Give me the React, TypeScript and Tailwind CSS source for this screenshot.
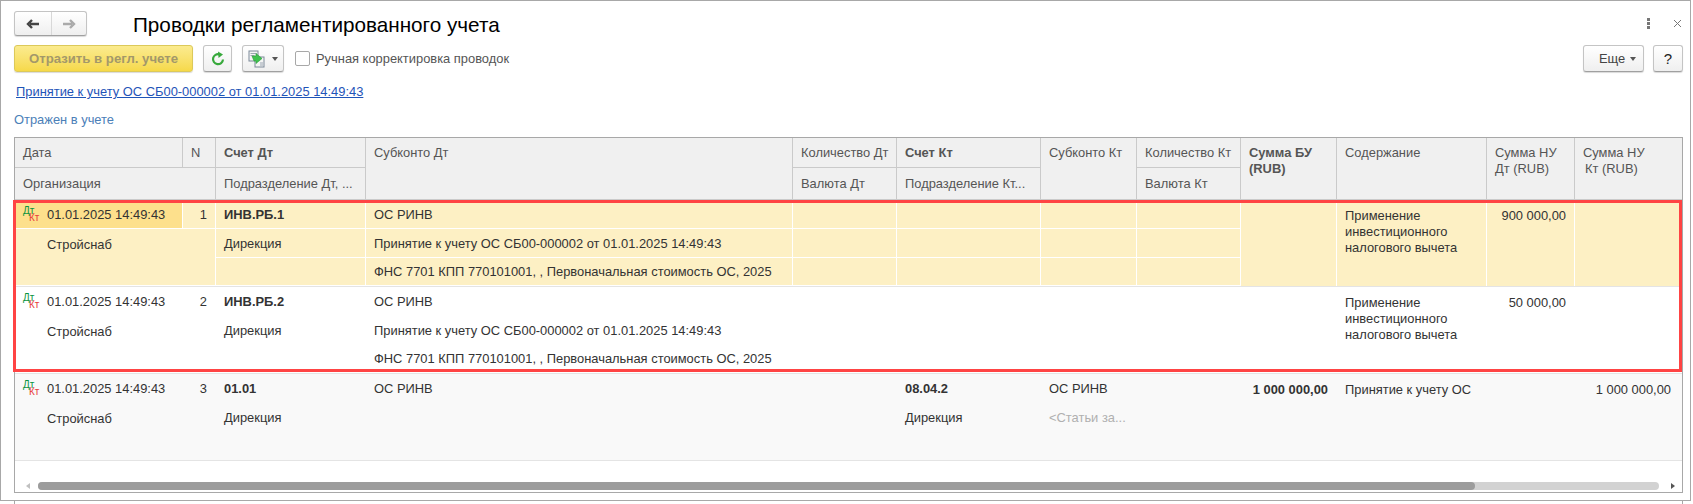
import { ReactNode } from "react";

const gridCols = "grid grid-cols-[168px_33px_150px_427px_104px_144px_96px_104px_96px_150px_88px_107px]";

function Btn({ className, children }: { className: string; children: ReactNode }) {
    return (
        <div className={`h-[27px] flex items-center justify-center rounded-[3px] border border-[#c4c4c4] border-b-[#a0a0a0] bg-gradient-to-b from-white to-[#efefef] shadow-[0_1px_1px_rgba(0,0,0,0.15)] ${className}`}>
            {children}
        </div>
    );
}

function Caret() {
    return <span className="w-0 h-0 border-x-[3.5px] border-x-transparent border-t-[4px] border-t-[#555]" />;
}

function CopyIcon() {
    return (
        <svg width="18" height="18" viewBox="0 0 18 18">
            <rect x="1" y="1" width="9" height="10" fill="#f4f4f4" stroke="#7d8a99" />
            <rect x="7" y="7" width="9" height="10" fill="#f4f4f4" stroke="#7d8a99" />
            <path d="M2.5 3.5h6M2.5 5.5h4M12 13h3M12 15h3" stroke="#9aa6b2" />
            <path d="M4 5h4V2.5l6 5-6 5V10H6z" fill="#3fc24f" stroke="#2b9a3b" strokeWidth="0.6" transform="translate(0 1)" />
        </svg>
    );
}

function DtKt() {
    return (
        <span className="relative block w-[20px] h-[20px] shrink-0 text-[10px] leading-[7px]">
            <span className="absolute left-0 top-[2px] text-[#0a9440]">Дт</span>
            <span className="absolute left-[6px] top-[9px] text-[#e8413c]">Кт</span>
        </span>
    );
}

function HeadCell({ className = "", bold, children }: { className?: string; bold?: boolean; children: ReactNode }) {
    return (
        <div className={`px-2 border-r border-b border-[#cacaca] overflow-hidden whitespace-nowrap ${bold ? "font-bold" : ""} ${className}`}>
            {children}
        </div>
    );
}

type RowData = {
    n: string;
    acc: string;
    content?: string[];
    ruDt?: string;
    ruKt?: string;
    sub: string[];
    accKt?: string;
    depKt?: string;
    subKt?: string;
    subKt2?: string;
    sum?: string;
    bg: string;
    line: string;
    dateBg: string;
};

function Cell({ line, className = "", children }: { line: string; className?: string; children?: ReactNode }) {
    return <div className={`px-2 pt-px flex items-center whitespace-nowrap overflow-hidden border-r border-b ${line} ${className}`}>{children}</div>;
}

function Row({ r }: { r: RowData }) {
    const l = r.line;
    return (
        <div className={`${gridCols} grid-rows-[29px_29px_28px] border-b border-[#e4e4e4] ${r.bg}`}>
            <Cell line={l} className={`col-start-1 row-start-1 gap-1 ${r.dateBg}`}>
                <DtKt />
                <span>01.01.2025 14:49:43</span>
            </Cell>
            <Cell line={l} className="col-start-2 row-start-1 justify-end">{r.n}</Cell>
            <Cell line={l} className="col-start-1 col-span-2 row-start-2 row-span-2 !items-start pl-8 !pt-[8px]">Стройснаб</Cell>

            <Cell line={l} className="col-start-3 row-start-1 font-bold">{r.acc}</Cell>
            <Cell line={l} className="col-start-3 row-start-2">Дирекция</Cell>
            <Cell line={l} className="col-start-3 row-start-3" />

            <Cell line={l} className="col-start-4 row-start-1">{r.sub[0]}</Cell>
            <Cell line={l} className="col-start-4 row-start-2">{r.sub[1]}</Cell>
            <Cell line={l} className="col-start-4 row-start-3">{r.sub[2]}</Cell>

            <Cell line={l} className="col-start-5 row-start-1" />
            <Cell line={l} className="col-start-5 row-start-2" />
            <Cell line={l} className="col-start-5 row-start-3" />

            <Cell line={l} className="col-start-6 row-start-1 font-bold">{r.accKt}</Cell>
            <Cell line={l} className="col-start-6 row-start-2">{r.depKt}</Cell>
            <Cell line={l} className="col-start-6 row-start-3" />

            <Cell line={l} className="col-start-7 row-start-1">{r.subKt}</Cell>
            <Cell line={l} className="col-start-7 row-start-2 text-[#b0b0b0]">{r.subKt2}</Cell>
            <Cell line={l} className="col-start-7 row-start-3" />

            <Cell line={l} className="col-start-8 row-start-1" />
            <Cell line={l} className="col-start-8 row-start-2" />
            <Cell line={l} className="col-start-8 row-start-3" />

            <div className={`col-start-9 row-start-1 row-span-3 border-r ${l} px-2 pt-[8px] text-right font-bold`}>{r.sum}</div>
            <div className={`col-start-10 row-start-1 row-span-3 border-r ${l} px-2 pt-[8px] leading-4`}>
                {r.content?.map((t) => <div key={t} className="whitespace-nowrap">{t}</div>)}
            </div>
            <div className={`col-start-11 row-start-1 row-span-3 border-r ${l} px-2 pt-[8px] text-right`}>{r.ruDt}</div>
            <div className="col-start-12 row-start-1 row-span-3 pl-3 pr-[11px] pt-[8px] text-right">{r.ruKt}</div>
        </div>
    );
}

const sub = [
    "ОС РИНВ",
    "Принятие к учету ОС СБ00-000002 от 01.01.2025 14:49:43",
    "ФНС 7701 КПП 770101001, , Первоначальная стоимость ОС, 2025",
];
const vychet = ["Применение", "инвестиционного", "налогового вычета"];

const rows: RowData[] = [
    { n: "1", acc: "ИНВ.РБ.1", sub, content: vychet, ruDt: "900 000,00", bg: "bg-[#fdf0c4]", line: "border-white", dateBg: "bg-[#fde08c]" },
    { n: "2", acc: "ИНВ.РБ.2", sub, content: vychet, ruDt: "50 000,00", bg: "bg-white", line: "border-transparent", dateBg: "" },
    {
        n: "3",
        acc: "01.01",
        sub: ["ОС РИНВ", "", ""],
        accKt: "08.04.2",
        depKt: "Дирекция",
        subKt: "ОС РИНВ",
        subKt2: "<Статьи за...",
        sum: "1 000 000,00",
        content: ["Принятие к учету ОС"],
        ruKt: "1 000 000,00",
        bg: "bg-[#f9f9f9]",
        line: "border-transparent",
        dateBg: "",
    },
];

export default function App() {
    return (
        <div className="w-[1693px] h-[504px] bg-white overflow-hidden font-['Liberation_Sans',Arial,sans-serif] text-[12.9px] leading-4 text-[#333]">
            <div className="w-[1691px] h-[501px] border border-[#a8a8a8] flex flex-col">
                {/* title bar */}
                <div className="h-[44px] shrink-0 flex items-start pl-[13px] pt-[10px] relative">
                    <div className="flex w-[73px] h-[25px] rounded-[3px] border border-[#c4c4c4] border-b-[#a0a0a0] bg-gradient-to-b from-white to-[#efefef] shadow-[0_1px_1px_rgba(0,0,0,0.15)]">
                        <div className="w-[37px] flex items-center justify-center border-r border-[#d8d8d8]">
                            <svg width="14" height="10" viewBox="0 0 14 10"><path d="M13 5H4M6 1 2 5l4 4" fill="none" stroke="#444" strokeWidth="2.4" /></svg>
                        </div>
                        <div className="flex-1 flex items-center justify-center">
                            <svg width="14" height="10" viewBox="0 0 14 10"><path d="M1 5h9M8 1l4 4-4 4" fill="none" stroke="#aaa" strokeWidth="2.4" /></svg>
                        </div>
                    </div>
                    <h1 className="ml-[46px] mt-[2px] text-[20.7px] leading-[24px] text-black">Проводки регламентированного учета</h1>
                    <div className="ml-auto mr-[8px] mt-[7px] flex items-center gap-[23px]">
                        <div className="flex flex-col gap-[1px]">
                            <span className="w-[3px] h-[3px] bg-[#777]" />
                            <span className="w-[3px] h-[3px] bg-[#777]" />
                            <span className="w-[3px] h-[3px] bg-[#777]" />
                        </div>
                        <svg width="9" height="9" viewBox="0 0 9 9"><path d="M1 1l7 7M8 1 1 8" stroke="#777" /></svg>
                    </div>
                </div>

                {/* command bar */}
                <div className="h-[27px] shrink-0 flex items-center pl-[13px] pr-[7px]">
                    <div className="w-[179px] h-[27px] flex items-center justify-center rounded-[3px] border border-[#dcc95a] bg-gradient-to-b from-[#fbeb8e] to-[#f6d949] shadow-[0_1px_1px_rgba(0,0,0,0.15)] font-bold text-[13.2px] text-[#a3986a]">
                        Отразить в регл. учете
                    </div>
                    <Btn className="w-[29px] ml-[10px]">
                        <svg width="16" height="16" viewBox="0 0 16 16" fill="none">
                            <path d="M13 8.5A5 5 0 1 1 9.5 3.4" stroke="#37a93c" strokeWidth="2.2" />
                            <path d="M8 0.5 13 3.5 8.5 7z" fill="#37a93c" />
                        </svg>
                    </Btn>
                    <Btn className="w-[42px] ml-[10px] gap-[6px]">
                        <CopyIcon />
                        <Caret />
                    </Btn>
                    <span className="ml-[11px] w-[15px] h-[15px] rounded-[2px] border border-[#a8a8a8] bg-white" />
                    <span className="ml-[6px] text-[#555]">Ручная корректировка проводок</span>
                    <Btn className="w-[61px] ml-auto gap-[5px] pl-[8px] text-[#444]">
                        Еще
                        <Caret />
                    </Btn>
                    <Btn className="w-[30px] ml-[9px] text-[15px] text-[#222]">?</Btn>
                </div>

                <a className="ml-[15px] mt-[12px] text-[#1f54b8] underline w-fit">Принятие к учету ОС СБ00-000002 от 01.01.2025 14:49:43</a>
                <div className="ml-[13px] mt-[12px] text-[#4b80b8]">Отражен в учете</div>

                {/* table */}
                <div className="ml-[13px] mt-[9px] w-[1669px] h-[356px] border border-[#a8a8a8] flex flex-col">
                    <div className={`${gridCols} grid-rows-[30px_32px] bg-[#f0f0f0] text-[#555] shrink-0`}>
                        <HeadCell className="col-start-1 row-start-1 pt-[7px]">Дата</HeadCell>
                        <HeadCell className="col-start-2 row-start-1 pt-[7px]">N</HeadCell>
                        <HeadCell className="col-start-1 col-span-2 row-start-2 pt-[8px]">Организация</HeadCell>
                        <HeadCell bold className="col-start-3 row-start-1 pt-[7px]">Счет Дт</HeadCell>
                        <HeadCell className="col-start-3 row-start-2 pt-[8px]">Подразделение Дт, ...</HeadCell>
                        <HeadCell className="col-start-4 row-start-1 row-span-2 pt-[7px]">Субконто Дт</HeadCell>
                        <HeadCell className="col-start-5 row-start-1 pt-[7px]">Количество Дт</HeadCell>
                        <HeadCell className="col-start-5 row-start-2 pt-[8px]">Валюта Дт</HeadCell>
                        <HeadCell bold className="col-start-6 row-start-1 pt-[7px]">Счет Кт</HeadCell>
                        <HeadCell className="col-start-6 row-start-2 pt-[8px]">Подразделение Кт...</HeadCell>
                        <HeadCell className="col-start-7 row-start-1 row-span-2 pt-[7px]">Субконто Кт</HeadCell>
                        <HeadCell className="col-start-8 row-start-1 pt-[7px]">Количество Кт</HeadCell>
                        <HeadCell className="col-start-8 row-start-2 pt-[8px]">Валюта Кт</HeadCell>
                        <HeadCell bold className="col-start-9 row-start-1 row-span-2 pt-[7px]">Сумма БУ<br />(RUB)</HeadCell>
                        <HeadCell className="col-start-10 row-start-1 row-span-2 pt-[7px]">Содержание</HeadCell>
                        <HeadCell className="col-start-11 row-start-1 row-span-2 pt-[7px]">Сумма НУ<br />Дт (RUB)</HeadCell>
                        <HeadCell className="col-start-12 row-start-1 row-span-2 pt-[7px] !border-r-0">Сумма НУ<br /><span className="ml-[2px]">Кт (RUB)</span></HeadCell>
                    </div>

                    <div className="relative">
                        {rows.map((r) => <Row key={r.n} r={r} />)}
                        <div className="absolute -left-[2px] top-0 w-[1669px] h-[172px] border-[3px] border-[#ff4444] pointer-events-none" />
                    </div>

                    {/* horizontal scrollbar */}
                    <div className="flex-1 flex items-end pb-[2px] pl-[11px] pr-[7px] gap-[8px]">
                        <span className="mb-[1px] w-0 h-0 border-y-[3px] border-y-transparent border-r-[4px] border-r-[#c0c0c0]" />
                        <div className="flex-1 h-[8px] rounded-full bg-[#d2d2d2] flex">
                            <div className="w-[1437px] h-full rounded-full bg-[#9c9c9c]" />
                        </div>
                        <span className="mb-[1px] ml-[4px] w-0 h-0 border-y-[3px] border-y-transparent border-l-[4px] border-l-[#555]" />
                    </div>
                </div>
            </div>
            <div className="ml-[14px] w-[1669px] h-[3px] border-x border-[#a8a8a8]" />
        </div>
    );
}
